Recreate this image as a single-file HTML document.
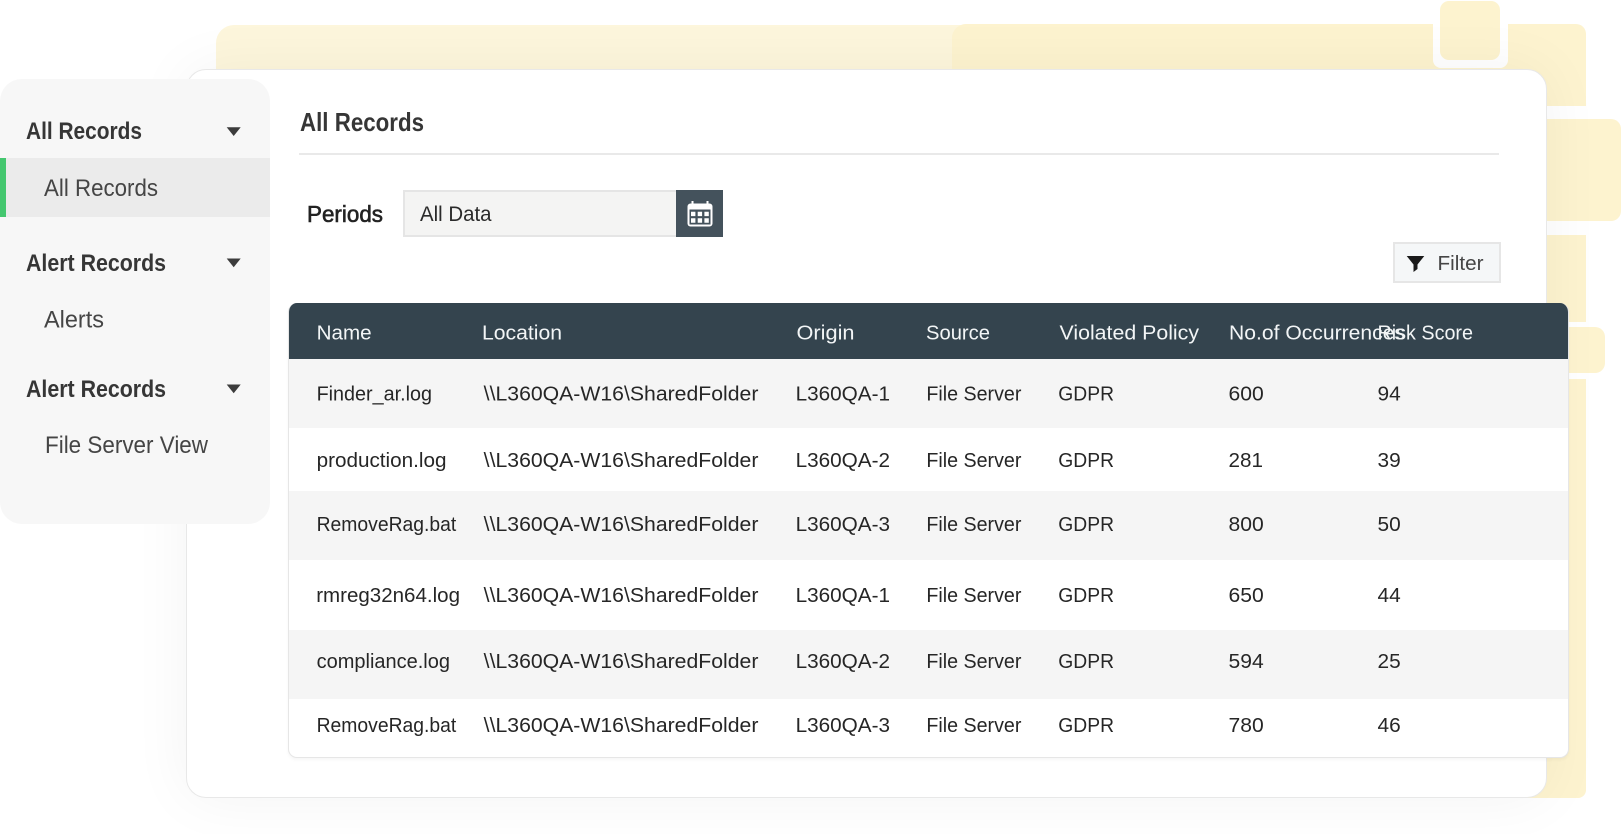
<!DOCTYPE html>
<html><head><meta charset="utf-8"><style>
html,body{margin:0;padding:0;width:1622px;height:834px;overflow:hidden;background:#fff}
body{position:relative}
.d{position:absolute;box-sizing:border-box}
.c{background:#fdf3cf}
svg{position:absolute;left:0;top:0}
text{font-family:"Liberation Sans",sans-serif}
.b{font-size:20.5px;fill:#262626}
.h{font-size:20.5px;fill:#f2f5f6}
.s{font-size:24px;fill:#454545}
.t{font-size:24px;font-weight:700;fill:#363636}
</style></head><body>
<div class="d" style="left:216px;top:25px;width:760px;height:100px;border-radius:18px 0 0 0;background:#fdf6dc"></div>
<div class="d c" style="left:952px;top:24px;width:634px;height:82px;border-radius:14px 10px 0 0"></div>
<div class="d c" style="left:1500px;top:119px;width:121px;height:102px;border-radius:0 10px 10px 0"></div>
<div class="d c" style="left:1500px;top:235px;width:86px;height:87px"></div>
<div class="d c" style="left:1500px;top:327px;width:105px;height:46px;border-radius:0 10px 10px 0"></div>
<div class="d c" style="left:1500px;top:379px;width:86px;height:419px;border-radius:0 0 8px 0"></div>
<div class="d" style="left:1433px;top:24px;width:75px;height:44px;border-radius:0 0 8px 8px;background:#fff"></div>
<div class="d c" style="left:1439.5px;top:1px;width:60px;height:59px;border-radius:9px"></div>
<div class="d" style="left:186px;top:69px;width:1361px;height:729px;border-radius:20px;background:#fff;border:1px solid #e8e8e8;box-shadow:0 0 60px rgba(20,30,30,.05)"></div>
<div class="d" style="left:0;top:79px;width:270px;height:445px;border-radius:22px;background:#f7f7f7"></div>
<div class="d" style="left:0;top:158px;width:270px;height:59px;background:#ebebeb"></div>
<div class="d" style="left:0;top:158px;width:6px;height:59px;background:#44c76f"></div>
<div class="d" style="left:299px;top:153px;width:1200px;height:2px;background:#e9e9e9"></div>
<div class="d" style="left:403px;top:190px;width:274px;height:47px;background:#f4f4f3;border:2px solid #e5e5e5;border-right:0"></div>
<div class="d" style="left:676px;top:190px;width:47px;height:47px;background:#44525c"></div>
<div class="d" style="left:1393px;top:242px;width:108px;height:41px;background:#f5f7f8;border:2px solid #e6e6e6"></div>
<div class="d" style="left:288px;top:303px;width:1281px;height:455px;border-radius:9px;background:#fff;border:1px solid #e6e6e6;border-top:0;box-shadow:0 2px 3px rgba(0,0,0,.04);overflow:hidden">
  <div style="height:56px;background:#34444e"></div>
  <div style="height:69px;background:#f5f5f5"></div>
  <div style="height:63px;background:#fff"></div>
  <div style="height:69px;background:#f5f5f5"></div>
  <div style="height:70px;background:#fff"></div>
  <div style="height:69px;background:#f5f5f5"></div>
</div>
<svg width="1622" height="834" viewBox="0 0 1622 834" xmlns="http://www.w3.org/2000/svg">
<text class="t" x="26" y="139" textLength="116" lengthAdjust="spacingAndGlyphs">All Records</text>
<text class="t" x="26" y="271" textLength="140" lengthAdjust="spacingAndGlyphs">Alert Records</text>
<text class="t" x="26" y="397" textLength="140" lengthAdjust="spacingAndGlyphs">Alert Records</text>
<text class="s" x="44" y="196" textLength="114" lengthAdjust="spacingAndGlyphs">All Records</text>
<text class="s" x="44" y="327.5" textLength="60" lengthAdjust="spacingAndGlyphs">Alerts</text>
<text class="s" x="45" y="453" textLength="163" lengthAdjust="spacingAndGlyphs">File Server View</text>
<path d="M226.7 127.3H240.7L233.7 136Z M226.7 258.5H240.7L233.7 267.3Z M226.7 384.5H240.7L233.7 393.3Z" fill="#3c3c3c"/>
<text x="300" y="131" font-size="26" font-weight="700" fill="#363636" textLength="124" lengthAdjust="spacingAndGlyphs">All Records</text>
<text x="307" y="222" font-size="23" fill="#222" stroke="#222" stroke-width=".6" textLength="76" lengthAdjust="spacingAndGlyphs">Periods</text>
<text x="420" y="221" font-size="21" fill="#2a2a2a" textLength="71.5" lengthAdjust="spacingAndGlyphs">All Data</text>
<g>
<rect x="687.5" y="203.5" width="25" height="23" rx="3" fill="#fff"/>
<rect x="691.5" y="201" width="2" height="4" fill="#fff"/><rect x="706.5" y="201" width="2" height="4" fill="#fff"/>
<rect x="689.5" y="209.5" width="21" height="15" fill="#44525c"/>
<path d="M691 211.7h4.4v4.4h-4.4z M697.7 211.7h4.4v4.4h-4.4z M704.4 211.7h4.4v4.4h-4.4z M691 218.3h4.4v4.4h-4.4z M697.7 218.3h4.4v4.4h-4.4z M704.4 218.3h4.4v4.4h-4.4z" fill="#fff"/>
</g>
<path d="M1406.7 256H1424.3L1417.5 264.5V269L1413.5 272V264.5Z" fill="#1a1a1a"/>
<text x="1437.5" y="270" font-size="20" fill="#454545" textLength="46" lengthAdjust="spacingAndGlyphs">Filter</text>

<text class="h" x="316.6" y="339.5" textLength="55" lengthAdjust="spacingAndGlyphs">Name</text>
<text class="h" x="482" y="339.5" textLength="80" lengthAdjust="spacingAndGlyphs">Location</text>
<text class="h" x="796.5" y="339.5" textLength="58" lengthAdjust="spacingAndGlyphs">Origin</text>
<text class="h" x="926" y="339.5" textLength="64" lengthAdjust="spacingAndGlyphs">Source</text>
<text class="h" x="1059.5" y="339.5" textLength="139.5" lengthAdjust="spacingAndGlyphs">Violated Policy</text>
<text class="h" x="1229" y="339.5" textLength="176" lengthAdjust="spacingAndGlyphs">No.of Occurrences</text>
<text class="h" x="1377.5" y="339.5" textLength="95.5" lengthAdjust="spacingAndGlyphs">Risk Score</text>

<g>
<text class="b" x="316.6" y="400.7" textLength="115.4" lengthAdjust="spacingAndGlyphs">Finder_ar.log</text>
<text class="b" x="483.7" y="400.7" textLength="274.7" lengthAdjust="spacingAndGlyphs">\\L360QA-W16\SharedFolder</text>
<text class="b" x="795.6" y="400.7" textLength="94.4" lengthAdjust="spacingAndGlyphs">L360QA-1</text>
<text class="b" x="926.4" y="400.7" textLength="95" lengthAdjust="spacingAndGlyphs">File Server</text>
<text class="b" x="1058.3" y="400.7" textLength="55.7" lengthAdjust="spacingAndGlyphs">GDPR</text>
<text class="b" x="1228.5" y="400.7" textLength="35.2" lengthAdjust="spacingAndGlyphs">600</text>
<text class="b" x="1377.5" y="400.7" textLength="23.2" lengthAdjust="spacingAndGlyphs">94</text>
</g>
<g>
<text class="b" x="316.6" y="467" textLength="129.9" lengthAdjust="spacingAndGlyphs">production.log</text>
<text class="b" x="483.7" y="467" textLength="274.7" lengthAdjust="spacingAndGlyphs">\\L360QA-W16\SharedFolder</text>
<text class="b" x="795.6" y="467" textLength="94.4" lengthAdjust="spacingAndGlyphs">L360QA-2</text>
<text class="b" x="926.4" y="467" textLength="95" lengthAdjust="spacingAndGlyphs">File Server</text>
<text class="b" x="1058.3" y="467" textLength="55.7" lengthAdjust="spacingAndGlyphs">GDPR</text>
<text class="b" x="1228.5" y="467" textLength="34.5" lengthAdjust="spacingAndGlyphs">281</text>
<text class="b" x="1377.5" y="467" textLength="23.2" lengthAdjust="spacingAndGlyphs">39</text>
</g>
<g>
<text class="b" x="316.6" y="531" textLength="139.7" lengthAdjust="spacingAndGlyphs">RemoveRag.bat</text>
<text class="b" x="483.7" y="531" textLength="274.7" lengthAdjust="spacingAndGlyphs">\\L360QA-W16\SharedFolder</text>
<text class="b" x="795.6" y="531" textLength="94.4" lengthAdjust="spacingAndGlyphs">L360QA-3</text>
<text class="b" x="926.4" y="531" textLength="95" lengthAdjust="spacingAndGlyphs">File Server</text>
<text class="b" x="1058.3" y="531" textLength="55.7" lengthAdjust="spacingAndGlyphs">GDPR</text>
<text class="b" x="1228.5" y="531" textLength="35.2" lengthAdjust="spacingAndGlyphs">800</text>
<text class="b" x="1377.5" y="531" textLength="23.2" lengthAdjust="spacingAndGlyphs">50</text>
</g>
<g>
<text class="b" x="316.2" y="601.8" textLength="143.8" lengthAdjust="spacingAndGlyphs">rmreg32n64.log</text>
<text class="b" x="483.7" y="601.8" textLength="274.7" lengthAdjust="spacingAndGlyphs">\\L360QA-W16\SharedFolder</text>
<text class="b" x="795.6" y="601.8" textLength="94.4" lengthAdjust="spacingAndGlyphs">L360QA-1</text>
<text class="b" x="926.4" y="601.8" textLength="95" lengthAdjust="spacingAndGlyphs">File Server</text>
<text class="b" x="1058.3" y="601.8" textLength="55.7" lengthAdjust="spacingAndGlyphs">GDPR</text>
<text class="b" x="1228.5" y="601.8" textLength="35.2" lengthAdjust="spacingAndGlyphs">650</text>
<text class="b" x="1377.5" y="601.8" textLength="23.2" lengthAdjust="spacingAndGlyphs">44</text>
</g>
<g>
<text class="b" x="316.6" y="668" textLength="133.4" lengthAdjust="spacingAndGlyphs">compliance.log</text>
<text class="b" x="483.7" y="668" textLength="274.7" lengthAdjust="spacingAndGlyphs">\\L360QA-W16\SharedFolder</text>
<text class="b" x="795.6" y="668" textLength="94.4" lengthAdjust="spacingAndGlyphs">L360QA-2</text>
<text class="b" x="926.4" y="668" textLength="95" lengthAdjust="spacingAndGlyphs">File Server</text>
<text class="b" x="1058.3" y="668" textLength="55.7" lengthAdjust="spacingAndGlyphs">GDPR</text>
<text class="b" x="1228.5" y="668" textLength="35.2" lengthAdjust="spacingAndGlyphs">594</text>
<text class="b" x="1377.5" y="668" textLength="23.2" lengthAdjust="spacingAndGlyphs">25</text>
</g>
<g>
<text class="b" x="316.6" y="732" textLength="139.7" lengthAdjust="spacingAndGlyphs">RemoveRag.bat</text>
<text class="b" x="483.7" y="732" textLength="274.7" lengthAdjust="spacingAndGlyphs">\\L360QA-W16\SharedFolder</text>
<text class="b" x="795.6" y="732" textLength="94.4" lengthAdjust="spacingAndGlyphs">L360QA-3</text>
<text class="b" x="926.4" y="732" textLength="95" lengthAdjust="spacingAndGlyphs">File Server</text>
<text class="b" x="1058.3" y="732" textLength="55.7" lengthAdjust="spacingAndGlyphs">GDPR</text>
<text class="b" x="1228.5" y="732" textLength="35.2" lengthAdjust="spacingAndGlyphs">780</text>
<text class="b" x="1377.5" y="732" textLength="23.2" lengthAdjust="spacingAndGlyphs">46</text>
</g>
</svg>
</body></html>
